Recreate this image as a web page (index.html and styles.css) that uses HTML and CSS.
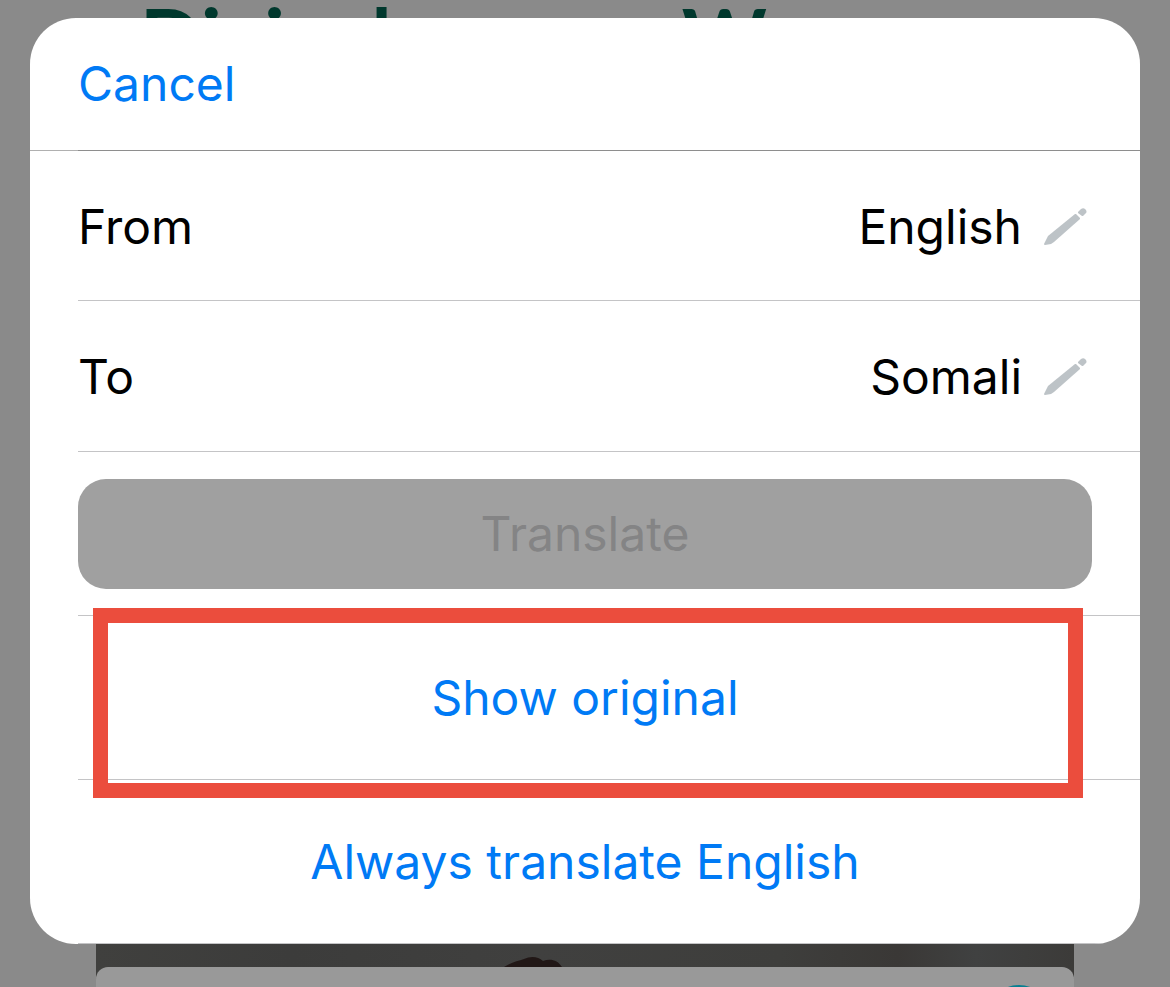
FILE: index.html
```html
<!DOCTYPE html>
<html lang="en">
<head>
<meta charset="utf-8">
<meta name="viewport" content="width=device-width, initial-scale=1">
<title>Translate</title>
<link rel="stylesheet" href="styles.css">
</head>
<body>
<div class="screen">
  <div class="backdrop" aria-hidden="true">
    <div class="page-title"><span>Diginal</span><span>W</span></div>
    <div class="photo">
      <svg class="hair" viewBox="0 0 64 12"><path d="M0 12C8 7 14 6 20 4C26 1 34 1 39 6C46 3 54 5 58 12Z"/></svg>
      <div class="card"><span class="badge"></span></div>
    </div>
  </div>
  <main class="sheet">
    <header class="sheet-header"><button class="link" type="button">Cancel</button></header>
    <div class="rows">
      <div class="row row-language">
        <span id="from-label">From</span>
        <button class="value" type="button" aria-labelledby="from-label from-value">
          <span id="from-value">English</span>
          <svg class="pencil" viewBox="0 0 44 38"><path d="M0 36L4 28L31 6L32 6L36 10L36 11L10 34L7 36L1 37Q0 37 0 36Z"/><path d="M34 4L37 1Q40-1 42 2Q43 4 42 5L39 8L38 8L34 5Z"/></svg>
        </button>
      </div>
      <div class="row row-language">
        <span id="to-label">To</span>
        <button class="value" type="button" aria-labelledby="to-label to-value">
          <span id="to-value">Somali</span>
          <svg class="pencil" viewBox="0 0 44 38"><path d="M0 36L4 28L31 6L32 6L36 10L36 11L10 34L7 36L1 37Q0 37 0 36Z"/><path d="M34 4L37 1Q40-1 42 2Q43 4 42 5L39 8L38 8L34 5Z"/></svg>
        </button>
      </div>
      <div class="row row-submit"><button class="translate" type="button" disabled>Translate</button></div>
      <div class="row row-action highlighted"><button class="link" type="button">Show original</button></div>
      <div class="row row-action"><button class="link" type="button">Always translate English</button></div>
    </div>
  </main>
</div>
</body>
</html>
```

FILE: styles.css
```css
* { box-sizing: border-box; }

body {
  margin: 0;
  background: #8a8a8a;
  color: #000;
  font-family: Inter, "Liberation Sans", sans-serif;
  font-size: 48px;
  line-height: 60px;
}

button {
  padding: 0;
  border: 0;
  background: none;
  color: inherit;
  font: inherit;
}

.screen {
  display: grid;
  height: 100vh;
  overflow: hidden;
}

.backdrop,
.sheet { grid-area: 1 / 1; }

.backdrop {
  display: flex;
  flex-direction: column;
  justify-content: space-between;
  min-height: 0;
  padding: 0 96px;
}

.page-title {
  display: flex;
  gap: 290px;
  padding-left: 44px;
  color: #00382d;
  font-family: Lato, sans-serif;
  font-size: 81px;
  font-weight: 700;
  line-height: 72px;
}

.photo {
  display: flex;
  flex-direction: column;
  height: 60px;
  padding-top: 28px;
  background: linear-gradient(90deg, #40403e, #3c3c3b 20%, #40403f 45%, #3e3e3c 70%, #3a3836 82%, #404141 90%, #3c3b39);
}

.hair {
  width: 64px;
  height: 12px;
  margin-left: 408px;
  fill: #211716;
}

.card {
  display: flex;
  justify-content: flex-end;
  height: 20px;
  padding: 18px 23px 0 0;
  border-radius: 12px 12px 0 0;
  background: #999;
  overflow: hidden;
}

.badge {
  flex: none;
  width: 64px;
  height: 64px;
  border-radius: 50%;
  background: #087f91;
}

.sheet {
  position: relative;
  align-self: start;
  margin: 18px 30px;
  border-radius: 46px;
  background: #fff;
  overflow: hidden;
}

.sheet-header {
  display: flex;
  align-items: center;
  height: 133px;
  padding: 0 48px;
  border-bottom: 1px solid #b0b0b0;
}

.rows {
  margin-top: -1px;
  padding-left: 48px;
}

.row {
  display: flex;
  align-items: center;
  border-bottom: 1px solid #c4c4c6;
}

.row:first-child { border-top: 1px solid #8e8e8e; }

.row-language {
  justify-content: space-between;
  height: 151px;
  padding: 2px 52px 0 0;
}

.value {
  display: flex;
  align-items: center;
  gap: 22px;
}

.pencil {
  width: 44px;
  height: 38px;
  fill: #bdc3c7;
}

.row-submit { padding: 27px 48px 26px 0; }

.translate {
  flex: 1;
  height: 110px;
  border-radius: 28px;
  background: #a0a0a0;
  color: #848485;
}

.row-action {
  justify-content: center;
  height: 164px;
  padding-right: 48px;
}

.link { color: #007af5; }

.highlighted { position: relative; }

.highlighted::after {
  content: "";
  position: absolute;
  z-index: 1;
  inset: -8px 57px -19px 15px;
  border: 15px solid #eb4d3d;
  pointer-events: none;
}
```
